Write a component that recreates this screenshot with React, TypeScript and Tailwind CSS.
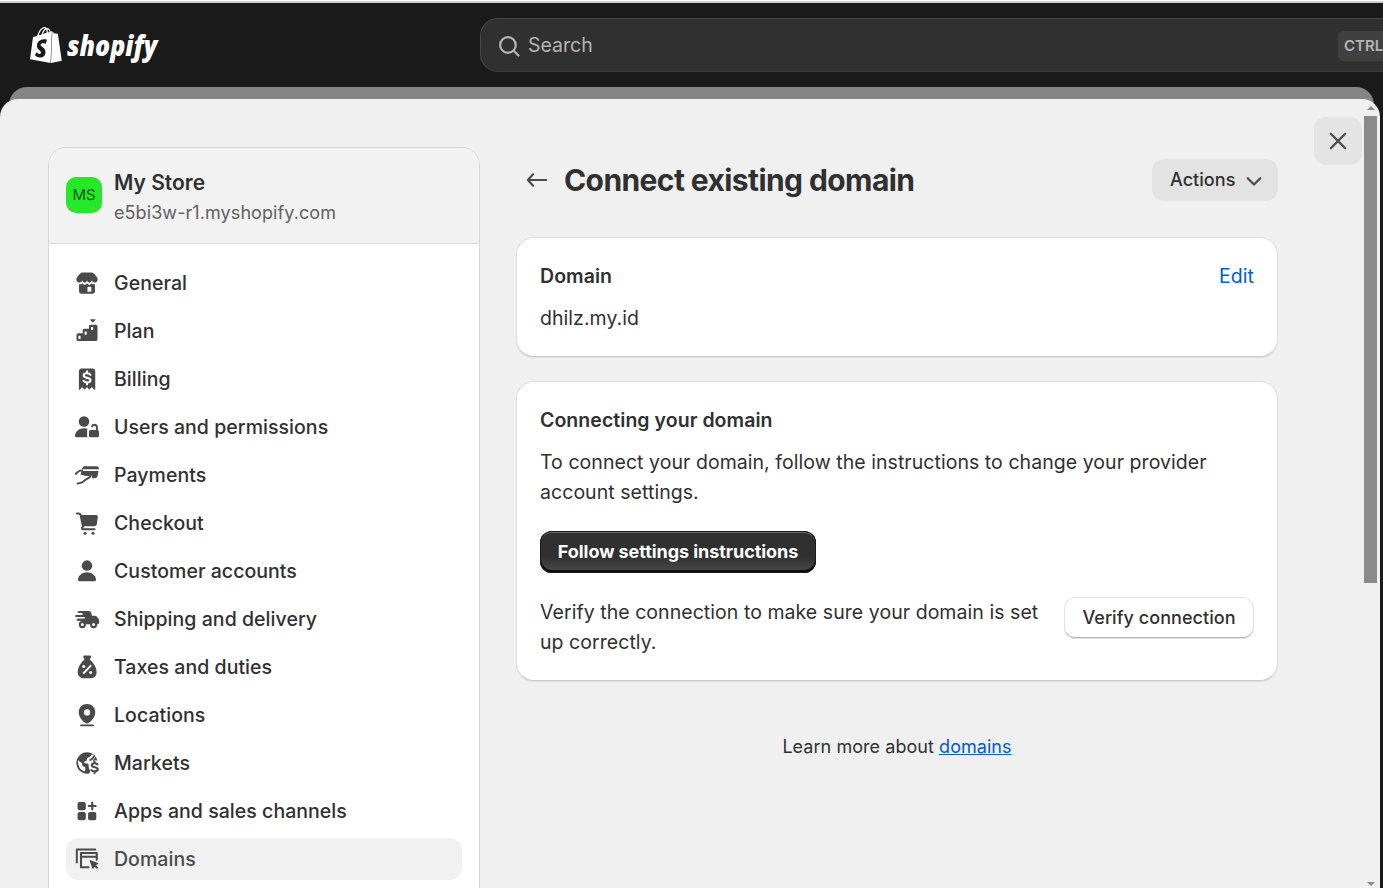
import { ReactNode } from "react";
import { SiShopify } from "react-icons/si";

type IconProps = {
  children: ReactNode;
  className?: string;
};

function Icon({ children, className = "" }: IconProps) {
  return (
    <svg
      viewBox="0 0 20 20"
      fill="currentColor"
      className={`w-[30px] h-[30px] shrink-0 text-[#4a4a4a] ${className}`}
    >
      {children}
    </svg>
  );
}

const line = {
  fill: "none",
  stroke: "currentColor",
  strokeLinecap: "round" as const,
  strokeLinejoin: "round" as const,
};

const menus = [
  {
    name: "General",
    icon: (
      <>
        <path d="M7.300 3h5.400c.8 0 1.500.3 2 .9l1.700 1.900c.4.500.7 1.100.7 1.800 0 1.200-.9 2.100-2 2.100-.9 0-1.600-.5-1.900-1.300-.5.9-1.100 1.500-1.600 1.500s-1.100-.6-1.600-1.500c-.4.9-1 1.500-1.500 1.500s-1.100-.6-1.600-1.500C6.600 9.200 5.900 9.700 5 9.700c-1.200 0-2.100-.9-2.100-2.100 0-.7.300-1.300.7-1.800l1.700-1.900c.5-.6 1.200-.9 2-.9Z" />
        <path
          fillRule="evenodd"
          d="M4.700 10.900c1.100 0 1.700-.3 2.200-.8.500.7 1 1.100 1.600 1.100s1.100-.4 1.500-1c.4.6.9 1 1.500 1s1.100-.4 1.600-1.100c.5.5 1.100.8 2.200.8v4.700c0 .8-.7 1.500-1.500 1.500H6.200c-.8 0-1.500-.7-1.500-1.500v-4.700Zm6.300 1.600c-.4 0-.7.3-.7.7v2.600h2.600v-2.600c0-.4-.3-.7-.7-.7H11Z"
        />
      </>
    ),
  },
  {
    name: "Plan",
    icon: (
      <>
        <path d="M12.400 2.100h3a.3.3 0 0 1 .2.500l-1.400 1.500a.4.4 0 0 1-.6 0l-1.400-1.500a.3.3 0 0 1 .2-.5Z" />
        <path
          fillRule="evenodd"
          d="M12.500 5.900h3.300c.7 0 1.200.5 1.200 1.200v8.400c0 .7-.5 1.200-1.200 1.200H4.200c-.7 0-1.200-.5-1.200-1.200v-2.800c0-.7.5-1.200 1.200-1.200h2.900V9.700c0-.7.5-1.200 1.200-1.200h3V7.100c0-.7.5-1.200 1.200-1.200Zm.2 1.500v2h1.400v-2h-1.400Zm-4.300 2.900v2.200h1.400v-2.200H8.400Zm-4.100 2.900v2.200h1.400v-2.200H4.300Z"
        />
      </>
    ),
  },
  {
    name: "Billing",
    icon: (
      <>
        <path d="M6.400 3h7.300c1 0 1.800.8 1.800 1.800v11.900c0 .5-.5.600-.8.300L13.200 15.400l-1.400 1.500c-.2.200-.4.200-.6 0L10 15.400l-1.300 1.500c-.2.200-.4.200-.6 0l-1.400-1.500L5.400 17c-.3.300-.8.200-.8-.3V4.800C4.600 3.800 5.400 3 6.400 3Z" />
        <path
          {...line}
          stroke="white"
          strokeWidth="1.400"
          d="M12.200 7.200c-.4-.7-1.200-1-2.200-1-1.300 0-2.200.6-2.200 1.500 0 2.200 4.500.9 4.500 3.100 0 .9-1 1.500-2.300 1.500-1.100 0-1.900-.4-2.300-1.100M10 4.900v1.200M10 12.400v1.200"
        />
      </>
    ),
  },
  {
    name: "Users and permissions",
    icon: (
      <>
        <circle cx="8" cy="6.300" r="3.500" />
        <path d="M2 15.500c.5-2.800 2.900-4.700 6-4.700.9 0 1.700.2 2.400.4-.2.300-.3.700-.3 1.100v3.300c0 .5.100.9.300 1.300H3.100c-.7 0-1.200-.6-1.100-1.400Z" />
        <rect x="11.300" y="12" width="6.700" height="4.900" rx="1.100" />
        <path {...line} strokeWidth="1.300" d="M13.400 9.600c.3-.8.900-1.100 1.500-1.100 1 0 1.700.7 1.700 1.700v2.400" />
      </>
    ),
  },
  {
    name: "Payments",
    icon: (
      <>
        <path d="M8.600 4.200h7.900c.8 0 1.400.5 1.400 1.300v.7H6.600l.3-.8c.3-.8.9-1.200 1.700-1.200Z" />
        <path d="M6.500 7.300h11.200l-.7 3.300c-.2.900-.9 1.500-1.900 1.500h-1.700c.3-.9-.3-1.900-1.400-2.200l-3.800.1-2.600-.4.900-2.300Z" />
        <path {...line} strokeWidth="1.300" d="M2.600 9.300c1.400-1.900 2.200-2.400 4.200-2.400M7.100 9.300c1.700 1 3.600.6 4.700.8.600.2.500.8.100 1.200-.8.800-1.800 1.200-2.800 1.800-1.600 1.800-2.800 2.500-5.400 2.500" />
      </>
    ),
  },
  {
    name: "Checkout",
    icon: (
      <>
        <path {...line} strokeWidth="1.400" d="M3.300 3.700h1.200c.6 0 1 .3 1.200.9l1.700 7.800c-1 .6-1 1.800.3 1.800h7.300" />
        <path d="M5.600 4.700h10.500c.7 0 1.200.6 1.100 1.300l-.6 4.700c-.1.800-.7 1.400-1.500 1.400H7.200L5.600 4.700Z" />
        <circle cx="8.700" cy="16.800" r="1" />
        <circle cx="14" cy="16.800" r="1" />
      </>
    ),
  },
  {
    name: "Customer accounts",
    icon: (
      <>
        <circle cx="10" cy="6.400" r="3.500" />
        <path d="M4 15.500c.5-2.700 3-4.600 6-4.600s5.500 1.900 6 4.600c.1.800-.4 1.400-1.100 1.400H5.100c-.7 0-1.200-.6-1.100-1.400Z" />
      </>
    ),
  },
  {
    name: "Shipping and delivery",
    icon: (
      <>
        <path d="M4.700 4.700h6.500c.8 0 1.400.5 1.600 1.200l.5 2h1.900c.6 0 1.100.2 1.500.7l.9 1c.3.400.5.800.5 1.300v1.200c0 .7-.5 1.400-1.300 1.400H5v-1.400h2V11H4V9.800h4.500V8.600H4V7.300h3V6H4.700V4.700Z" />
        <path {...line} strokeWidth="1.300" d="M4.300 5.400h4M2.700 8h4M3.700 10.500h4" />
        <circle cx="6.900" cy="13.700" r="1.700" fill="white" stroke="currentColor" strokeWidth="1.400" />
        <circle cx="14.400" cy="13.700" r="1.700" fill="white" stroke="currentColor" strokeWidth="1.400" />
      </>
    ),
  },
  {
    name: "Taxes and duties",
    icon: (
      <>
        <path d="M8.100 2.400h4c.5 0 .8.5.6.900l-.7 1.400v1H8.200v-1l-.7-1.400c-.2-.4.100-.9.600-.9Z" />
        <path d="M8.100 5.400h4c2.400 1.800 4.300 5.200 4.300 8.100 0 2.400-1.600 4-4 4H7.800c-2.400 0-4-1.600-4-4 0-2.900 1.900-6.300 4.300-8.100Z" />
        <path {...line} stroke="white" strokeWidth="1.300" d="m7.800 14 4.600-4.800" />
        <circle cx="7.800" cy="9.700" r="1" fill="white" />
        <circle cx="12.400" cy="13.600" r="1" fill="white" />
      </>
    ),
  },
  {
    name: "Locations",
    icon: (
      <>
        <path
          fillRule="evenodd"
          d="M10 2.700c3.100 0 5.500 2.300 5.500 5.400 0 3.200-2.100 5.300-4.100 7-.8.700-2 .7-2.800 0-2-1.700-4.100-3.800-4.100-7 0-3.100 2.400-5.400 5.500-5.400Zm0 3.500a2.100 2.100 0 1 0 0 4.200 2.100 2.100 0 0 0 0-4.200Z"
        />
        <path {...line} strokeWidth="1.300" d="M6 16.900h8" />
      </>
    ),
  },
  {
    name: "Markets",
    icon: (
      <>
        <circle cx="10" cy="10" r="7.100" />
        <path
          fill="white"
          d="M4.100 7.600c.2 1.500 1.500 1.400 2.300 2.300.6.700.2 1.500.8 2.100.7.700 1.500.3 1.700 1.200.1.700-.3 1.300-.2 2.400-2.300-.5-4-2.100-4.400-4.300-.3-1.400-.5-2.500-.2-3.700ZM13.400 4.200 11.800 6c-.5.500-1.200.3-1.600.8-.5.600 0 1.100-.6 1.700-.5.500-1.400.2-1.500.9-.1.800 1.400.8 2.300.9.900.1.700 1.500.7 2.100 0 2 1.300 2.200 1 3.200l-.9 2.300 6.800-.2V8l-1.500.3c-.6-.1-1.200-.3-1.600-.1l-.9.900c-.5-.5.600-1.500 1-2.300l.7-1.200-2.300-1.400Z"
        />
        <path d="m14.700 4.700.8.700-1.600 2.300-1.800 1.100-.8-1 1.400-.8 2-2.300Z" />
        <path {...line} strokeWidth="1.400" d="M16.900 10.900c-.4-.5-1-.7-1.800-.7-1.200 0-1.900.5-1.900 1.300 0 1.900 4 .9 4 2.700 0 .8-.9 1.400-2.100 1.400-1 0-1.700-.3-2.100-.9M15 9v1.100M15 15.700v1.100" />
      </>
    ),
  },
  {
    name: "Apps and sales channels",
    icon: (
      <>
        <rect x="3.700" y="4" width="5.500" height="5.500" rx="1.300" />
        <rect x="3.700" y="10.700" width="5.500" height="5.500" rx="1.300" />
        <rect x="10.700" y="10.700" width="5.500" height="5.500" rx="1.300" />
        <path {...line} strokeWidth="1.400" d="M13.500 4.400v4.600M11.200 6.700h4.600" />
      </>
    ),
  },
  {
    name: "Domains",
    active: true,
    icon: (
      <>
        <path {...line} strokeWidth="1.300" d="M3.200 12.400V3.700h12.300" />
        <path {...line} strokeWidth="1.400" d="M11 15.500H6V6h10.500v4.500M6 8.500h10.500" />
        <path d="m12.500 10.900 4.700 1.700c.4.200.4.600.1.800l-1.300.8 1.500 1.500-.9.900-1.500-1.500-.8 1.200c-.2.400-.7.300-.8-.1l-1.600-4.700c-.1-.4.200-.7.600-.6Z" />
      </>
    ),
  },
];

function Header() {
  return (
    <div className="h-[84px] flex shrink-0 bg-[#1a1a1a] overflow-hidden">
      <div className="w-[480px] shrink-0 flex pl-[28px] pt-[24px] text-white">
        <SiShopify className="w-9 h-9 shrink-0" />
        <span className="ml-[3px] mt-px leading-[34px] text-[29px] font-extrabold italic font-['Open_Sans',sans-serif] origin-left scale-x-[0.86]">
          shopify
        </span>
      </div>
      <div className="mt-[15px] w-[980px] h-[54px] shrink-0 flex items-center rounded-[18px] border border-[#484848] border-b-[#3c3c3c] bg-[#303030] pl-[13px] text-[#b5b5b5]">
        <Icon className="mt-0.5 !text-[#b5b5b5]">
          <circle cx="9.300" cy="9.300" r="5.200" {...line} strokeWidth="1.500" />
          <path {...line} strokeWidth="1.500" d="m13.200 13.200 3.100 3.100" />
        </Icon>
        <span className="ml-1 mt-0.5 text-[19.500px]">Search</span>
        <span className="ml-auto mt-0.5 mr-[65px] h-[30px] w-[56px] flex items-center rounded-md bg-[#404040] pl-1.5 text-[15px] font-semibold">
          CTRL
        </span>
      </div>
    </div>
  );
}

function Sidebar() {
  return (
    <div className="w-[432px] h-[800px] shrink-0 mt-[48px] rounded-t-[18px] border border-[#d6d6d6] bg-white overflow-hidden">
      <div className="h-[96px] flex bg-[#f2f2f2] border-b border-[#dcdcdc] pl-[17px]">
        <div className="mt-[29px] w-9 h-9 rounded-[10px] bg-[#25e82b] flex items-center justify-center text-[15px] text-[#14570f]">
          MS
        </div>
        <div className="ml-3 mt-5">
          <div className="text-[21px] leading-[30px] font-semibold text-[#303030]">
            My Store
          </div>
          <div className="text-[18px] leading-[30px] tracking-[0.08px] text-[#616161]">
            e5bi3w-r1.myshopify.com
          </div>
        </div>
      </div>
      <div className="flex flex-col gap-1.5 px-[17px] pt-[18px]">
        {menus.map((menu) => (
          <a
            key={menu.name}
            className={`h-[42px] flex items-center rounded-xl pl-1.5 text-[19.500px] font-medium tracking-[0.05px] ${
              menu.active ? "bg-[#f1f1f1] text-[#4a4a4a]" : "text-[#303030]"
            }`}
          >
            <Icon>{menu.icon}</Icon>
            <span className="ml-3 mt-0.5">{menu.name}</span>
          </a>
        ))}
      </div>
    </div>
  );
}

const card =
  "rounded-[18px] bg-white px-[23px] border border-[#e0e0e0] border-b-[#cccccc] shadow-[0_1px_1px_0_#dcdcdc]";

function Content() {
  return (
    <div className="ml-[36px] w-[762px] shrink-0 pt-[60px] text-[19.500px] leading-[30px] tracking-[0.05px] text-[#303030]">
      <div className="h-[42px] flex items-center">
        <Icon className="ml-[6px]">
          <path {...line} strokeWidth="1.400" d="M16.200 10H4M7.400 6.200 3.900 10l3.500 3.800" />
        </Icon>
        <h1 className="ml-3 text-[30px] font-[650] tracking-[-0.59px]">
          Connect existing domain
        </h1>
        <button className="ml-auto h-[42px] w-[126px] flex items-center rounded-xl bg-[#e3e3e3] pl-[18px] text-[18px] font-medium">
          Actions
          <Icon className="ml-1">
            <path {...line} strokeWidth="1.500" d="m5.800 8.800 4.200 4.200 4.200-4.200" />
          </Icon>
        </button>
      </div>

      <div className={`${card} mt-[36px] h-[120px] pt-[23px]`}>
        <div className="flex justify-between">
          <h2 className="font-semibold">Domain</h2>
          <a className="text-[#005bd3]">Edit</a>
        </div>
        <p className="mt-3">dhilz.my.id</p>
      </div>

      <div className={`${card} mt-[24px] h-[300px] pt-[23px]`}>
        <h2 className="font-semibold">Connecting your domain</h2>
        <p className="mt-3">
          To connect your domain, follow the instructions to change your
          provider account settings.
        </p>
        <button className="mt-6 h-[42px] w-[276px] flex items-center justify-center rounded-xl bg-linear-to-b from-[#303030] from-60% to-[#4b4b4b] text-[18px] font-bold tracking-[-0.06px] text-white shadow-[inset_0_0_0_1px_#1a1a1a,inset_0_-2px_0_1px_#0d0d0d,inset_0_2px_0_0_#666666]">
          Follow settings instructions
        </button>
        <div className="mt-6 flex justify-between">
          <p className="w-[510px]">
            Verify the connection to make sure your domain is set up correctly.
          </p>
          <button className="h-[42px] w-[190px] shrink-0 rounded-xl bg-white text-[18px] font-medium shadow-[inset_0_0_0_1px_#e3e3e3,inset_0_-2px_0_0_#b5b5b5]">
            Verify connection
          </button>
        </div>
      </div>

      <p className="mt-[51px] text-center text-[18px]">
        Learn more about{" "}
        <a className="text-[#005bd3] underline">domains</a>
      </p>
    </div>
  );
}

function Scrollbar() {
  return (
    <div className="ml-0.5 w-[13px] h-[789px] shrink-0 flex flex-col items-center text-[#8a8a8a]">
      <svg viewBox="0 0 8 4" className="mt-[7px] w-2 h-1 shrink-0" fill="currentColor">
        <path d="M4 0 8 4H0Z" />
      </svg>
      <div className="mt-[6px] w-[13px] h-[467px] bg-[#8a8a8a]" />
      <svg viewBox="0 0 8 4" className="mt-auto mb-[2px] w-2 h-1 shrink-0" fill="currentColor">
        <path d="M0 0H8L4 4Z" />
      </svg>
    </div>
  );
}

export default function App() {
  return (
    <div className="w-[1383px] h-[888px] overflow-hidden flex flex-col bg-[#1a1a1a] font-['Inter',sans-serif]">
      <div className="h-[3px] shrink-0 border-t border-white bg-[#cfcfcf]" />
      <Header />
      <div className="mx-[9px] h-[30px] -mb-[18px] shrink-0 rounded-t-[18px] bg-[#858585]" />
      <div className="relative w-[1380px] h-[789px] shrink-0 flex rounded-t-[18px] bg-[#f0f0f0] overflow-hidden pl-[48px]">
        <Sidebar />
        <Content />
        <button className="ml-[36px] mt-[18px] w-12 h-12 shrink-0 flex items-center justify-center rounded-xl bg-[#e4e4e4]">
          <Icon>
            <path {...line} strokeWidth="1.500" d="m5.200 5.200 9.600 9.600M14.800 5.200l-9.600 9.600" />
          </Icon>
        </button>
        <Scrollbar />
      </div>
    </div>
  );
}
